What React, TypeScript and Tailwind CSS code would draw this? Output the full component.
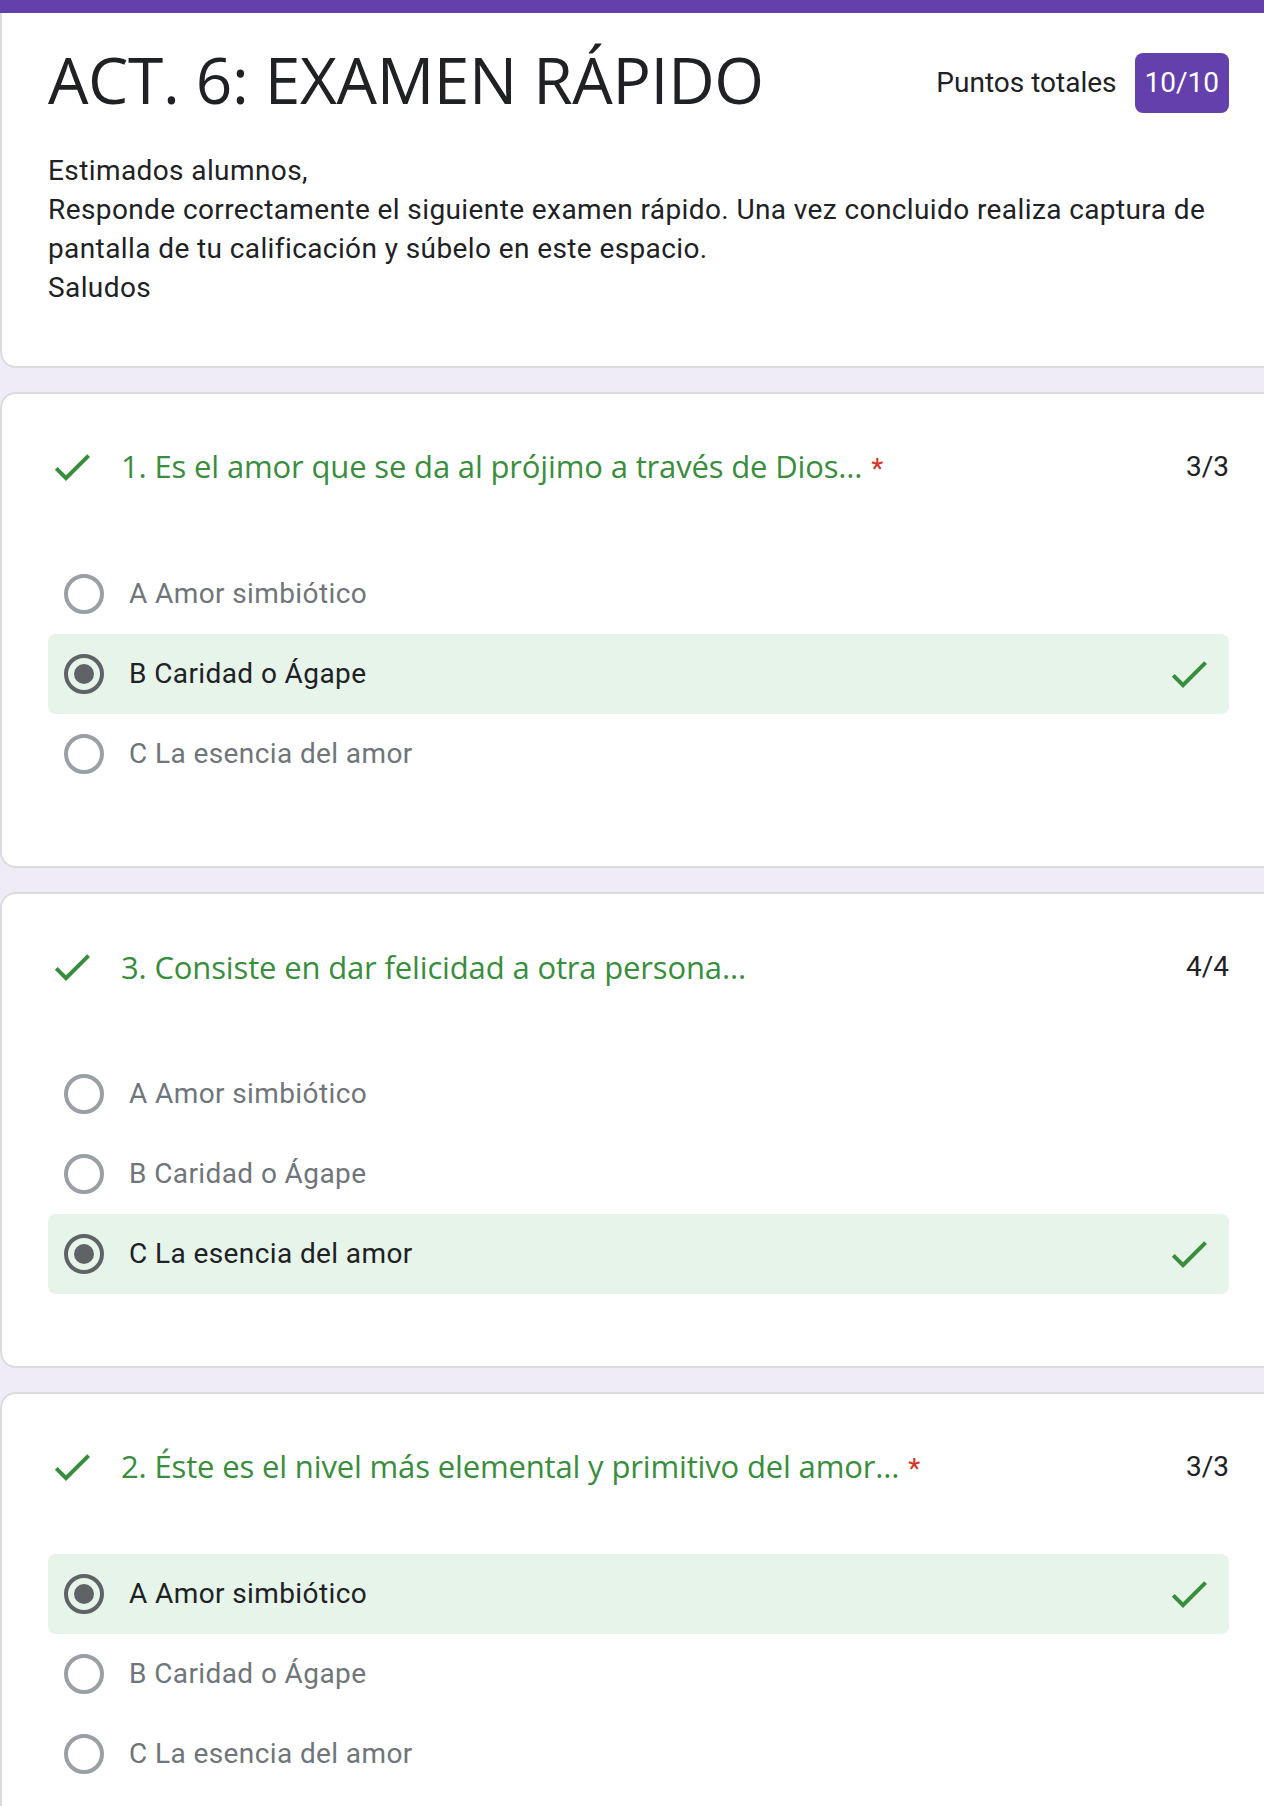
type Question = {
  title: string
  points: string
  required: boolean
  answer: number
}

const options = ['A Amor simbiótico', 'B Caridad o Ágape', 'C La esencia del amor']

const questions: Question[] = [
  { title: '1. Es el amor que se da al prójimo a través de Dios...', points: '3/3', required: true, answer: 1 },
  { title: '3. Consiste en dar felicidad a otra persona...', points: '4/4', required: false, answer: 2 },
  { title: '2. Éste es el nivel más elemental y primitivo del amor...', points: '3/3', required: true, answer: 0 },
]

function CheckIcon() {
  return (
    <svg viewBox="0 0 24 24" className="h-12 w-12 shrink-0 fill-[#388e3c]">
      <path d="M9 16.17L4.83 12l-1.42 1.41L9 19 21 7l-1.41-1.41z" />
    </svg>
  )
}

function Radio({ selected }: { selected: boolean }) {
  return (
    <span
      className={`flex h-10 w-10 shrink-0 items-center justify-center rounded-full border-4 ${
        selected ? 'border-[#5f6368]' : 'border-[#9aa0a6]'
      }`}
    >
      {selected && <span className="h-5 w-5 rounded-full bg-[#5f6368]" />}
    </span>
  )
}

function QuestionCard({ question }: { question: Question }) {
  return (
    <section className="mt-6 rounded-l-2xl border-y-2 border-l-2 border-[#dadce0] bg-white pb-[72px] pl-[46px] pr-[35px] pt-[49px]">
      <div className="flex h-12 items-center">
        <CheckIcon />
        <h2 className="ml-[25px] font-['Open_Sans',sans-serif] text-[31px] leading-[48px] tracking-[-0.15px] text-[#388e3c]">
          {question.title}
          {question.required && (
            <span className="ml-[9px] font-['Roboto',sans-serif] text-[28px] text-[#d93025]">*</span>
          )}
        </h2>
        <span className="ml-auto text-[28px] text-[#202124]">{question.points}</span>
      </div>
      <div className="mt-[63px]">
        {options.map((label, i) => {
          const selected = i === question.answer
          return (
            <div
              key={label}
              className={`flex h-20 items-center rounded-lg pl-4 pr-4 ${selected ? 'bg-[#e6f4ea]' : ''}`}
            >
              <Radio selected={selected} />
              <span
                className={`ml-[25px] text-[28px] tracking-[0.4px] ${
                  selected ? 'text-[#202124]' : 'text-[#70757a]'
                }`}
              >
                {label}
              </span>
              {selected && (
                <span className="ml-auto">
                  <CheckIcon />
                </span>
              )}
            </div>
          )
        })}
      </div>
    </section>
  )
}

export default function App() {
  return (
    <div className="h-[1806px] overflow-hidden bg-[#efebf7] font-['Roboto',sans-serif]">
      <div className="h-[13px] bg-[#6440ad]" />
      <header className="rounded-bl-2xl border-b-2 border-l-2 border-[#dadce0] bg-white pb-[59px] pl-[46px] pr-[35px] pt-[27px]">
        <div className="flex items-start justify-between">
          <h1 className="font-['Open_Sans',sans-serif] text-[64px] leading-[80px] tracking-[-0.35px] text-[#202124]">
            ACT. 6: EXAMEN RÁPIDO
          </h1>
          <div className="mt-[13px] flex items-center gap-[18px]">
            <span className="text-[28px] text-[#202124]">Puntos totales</span>
            <span className="flex h-[60px] items-center rounded-lg bg-[#6440ad] px-[10px] text-[28px] text-white">
              10/10
            </span>
          </div>
        </div>
        <div className="mt-[31px] text-[28px] leading-[39px] tracking-[0.4px] text-[#202124]">
          <p>Estimados alumnos,</p>
          <p>
            Responde correctamente el siguiente examen rápido. Una vez concluido realiza captura de pantalla de tu
            calificación y súbelo en este espacio.
          </p>
          <p>Saludos</p>
        </div>
      </header>
      {questions.map((q) => (
        <QuestionCard key={q.title} question={q} />
      ))}
    </div>
  )
}
